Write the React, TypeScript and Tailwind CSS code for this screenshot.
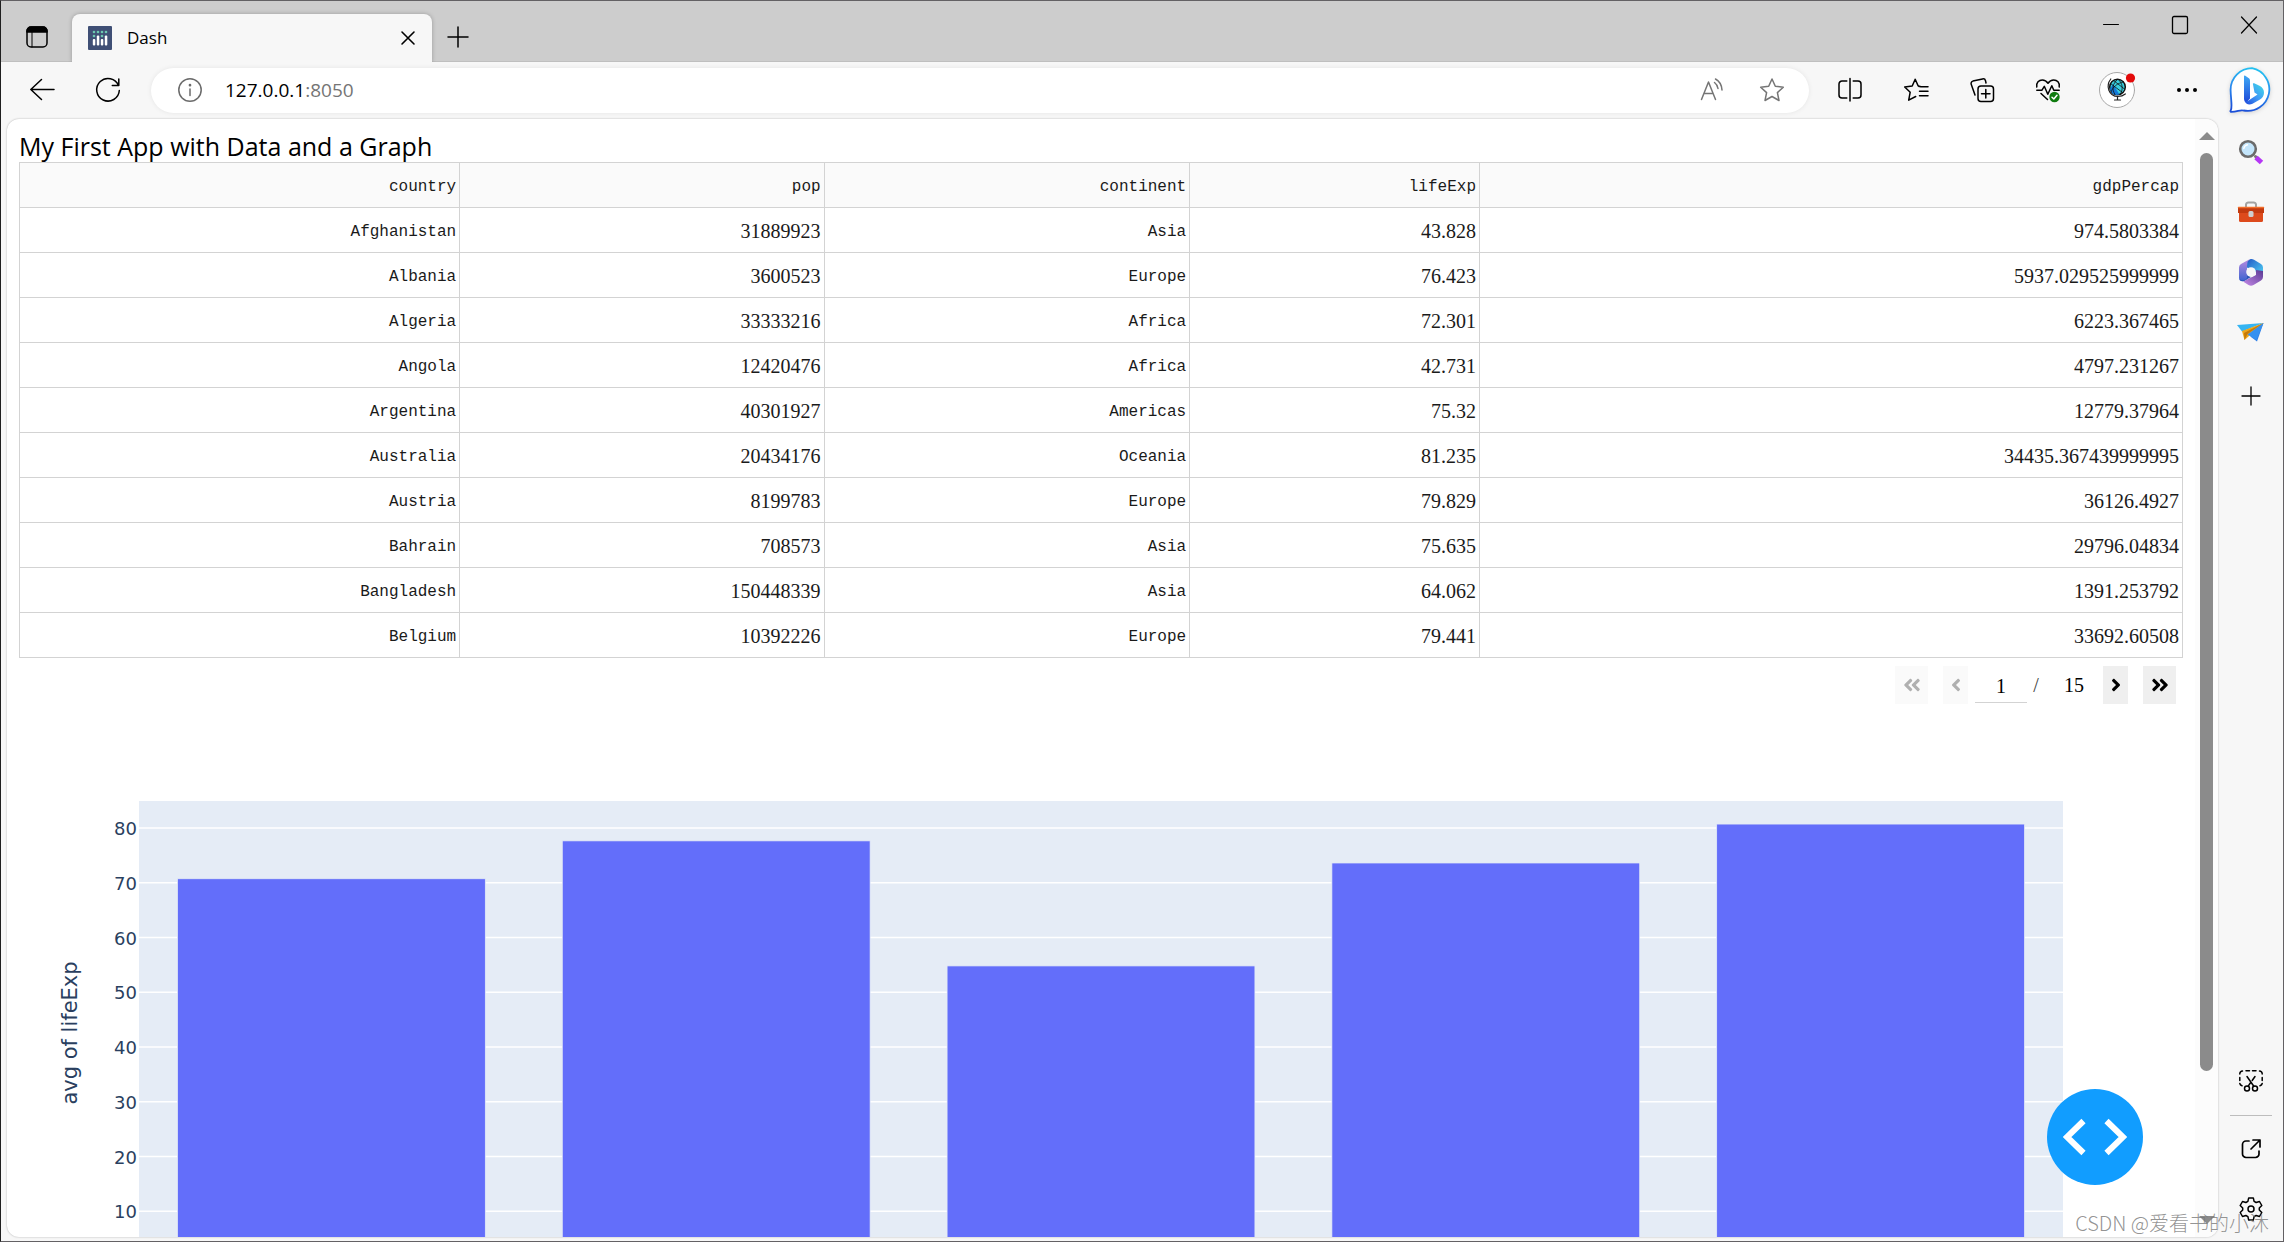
import type { ReactNode } from "react";
import { FaAngleDoubleLeft, FaAngleDoubleRight, FaAngleLeft, FaAngleRight } from "react-icons/fa";

const columns = [
  { name: "country", width: "w-[20.35%]", numeric: false },
  { name: "pop", width: "w-[16.85%]", numeric: true },
  { name: "continent", width: "w-[16.9%]", numeric: false },
  { name: "lifeExp", width: "w-[13.4%]", numeric: true },
  { name: "gdpPercap", width: "w-[32.5%]", numeric: true },
];

const rows = [
  ["Afghanistan", "31889923", "Asia", "43.828", "974.5803384"],
  ["Albania", "3600523", "Europe", "76.423", "5937.029525999999"],
  ["Algeria", "33333216", "Africa", "72.301", "6223.367465"],
  ["Angola", "12420476", "Africa", "42.731", "4797.231267"],
  ["Argentina", "40301927", "Americas", "75.32", "12779.37964"],
  ["Australia", "20434176", "Oceania", "81.235", "34435.367439999995"],
  ["Austria", "8199783", "Europe", "79.829", "36126.4927"],
  ["Bahrain", "708573", "Asia", "75.635", "29796.04834"],
  ["Bangladesh", "150448339", "Asia", "64.062", "1391.253792"],
  ["Belgium", "10392226", "Europe", "79.441", "33692.60508"],
];

const bars = [70.73, 77.65, 54.81, 73.61, 80.72];
const ticks = [10, 20, 30, 40, 50, 60, 70, 80];

const PLOT_HEIGHT = 465;
const UNIT = 5.475;

function Icon({ size = 24, width = 1.5, children }: { size?: number; width?: number; children: ReactNode }) {
  return (
    <svg
      width={size}
      height={size}
      viewBox={`0 0 ${size} ${size}`}
      fill="none"
      stroke="currentColor"
      strokeWidth={width}
      strokeLinecap="round"
      strokeLinejoin="round"
      className="shrink-0 overflow-visible"
    >
      {children}
    </svg>
  );
}

function IconButton({ label, className, children }: { label: string; className: string; children: ReactNode }) {
  return (
    <button aria-label={label} className={`flex shrink-0 items-center justify-center ${className}`}>
      {children}
    </button>
  );
}

function TabStrip() {
  return (
    <div className="flex h-[61px] shrink-0 border-b border-[#bfbfbf] bg-[#cdcdcd]">
      <IconButton label="Tab actions" className="mt-3 h-12 w-[71px]">
        <Icon size={22}>
          <rect x="1" y="1" width="20" height="20" rx="4" />
          <path d="M1 6V5a4 4 0 0 1 4-4h12a4 4 0 0 1 4 4v1z" fill="currentColor" />
          <path d="M6 6v15" strokeWidth="1" />
        </Icon>
      </IconButton>
      <div className="mt-[13px] -mb-px flex w-[360px] items-center rounded-t-lg bg-[#f7f7f7] pr-3 pl-4 shadow-[0_0_4px_rgba(0,0,0,0.25)] [clip-path:inset(-6px_-6px_0_-6px)]">
        <svg width="24" height="24" viewBox="0 0 24 24">
          <rect width="24" height="24" rx="1" fill="#3f4f75" />
          <g fill="#fff">
            <rect x="4.800" y="13" width="2.500" height="6.500" rx="1" />
            <rect x="8.800" y="9.500" width="2.500" height="10" rx="1" />
            <rect x="12.800" y="13" width="2.500" height="6.500" rx="1" />
            <rect x="16.800" y="9.500" width="2.500" height="10" rx="1" />
          </g>
          <g fill="#6cc7b0">
            <circle cx="6" cy="6" r="1.300" />
            <circle cx="10" cy="6" r="1.300" />
            <circle cx="14" cy="6" r="1.300" />
            <circle cx="18" cy="6" r="1.300" />
            <circle cx="6" cy="10" r="1.300" />
            <circle cx="14" cy="10" r="1.300" />
          </g>
        </svg>
        <span className="ml-[15px] flex-1 text-[17px]">Dash</span>
        <IconButton label="Close tab" className="h-6 w-6">
          <Icon size={12} width={1.6}>
            <path d="M0 0l12 12M12 0L0 12" />
          </Icon>
        </IconButton>
      </div>
      <IconButton label="New tab" className="mt-3 h-12 w-[52px]">
        <Icon size={20}>
          <path d="M10 0v20M0 10h20" />
        </Icon>
      </IconButton>
      <div className="flex-1" />
      <IconButton label="Minimize" className="h-12 w-[69px]">
        <Icon size={16} width={1}>
          <path d="M.5 7.500h15" />
        </Icon>
      </IconButton>
      <IconButton label="Maximize" className="h-12 w-[69px]">
        <Icon size={16} width={1.3}>
          <rect x=".5" y="-.5" width="15" height="17" rx="1.500" />
        </Icon>
      </IconButton>
      <IconButton label="Close" className="h-12 w-[69px]">
        <Icon size={16} width={1.2}>
          <path d="M.5 0l15 16M15.500 0l-15 16" />
        </Icon>
      </IconButton>
    </div>
  );
}

function BingLogo() {
  return (
    <svg width="46" height="46" viewBox="0 0 46 46" className="drop-shadow-sm">
      <defs>
        <linearGradient id="bubble" x1=".6" y1="0" x2=".4" y2="1">
          <stop offset="0" stopColor="#22c1f0" />
          <stop offset=".5" stopColor="#2a8bef" />
          <stop offset="1" stopColor="#1b4fd8" />
        </linearGradient>
        <linearGradient id="stem" x1="0" y1="0" x2="0" y2="1">
          <stop offset="0" stopColor="#3fa9f5" />
          <stop offset="1" stopColor="#1c48d8" />
        </linearGradient>
        <linearGradient id="bowl" x1="1" y1="0" x2="0" y2="1">
          <stop offset="0" stopColor="#3fe0e6" />
          <stop offset=".5" stopColor="#3f9cf5" />
          <stop offset="1" stopColor="#1f49dc" />
        </linearGradient>
      </defs>
      <path
        d="M23 1.200a21.500 21.500 0 1 1-8.500 42.300c-4-1-6 1.500-12.700 1.300c-.6-.2-.5-.8 0-1.500c1.800-3.500 0-10-.2-20.300A21.500 21.500 0 0 1 23 1.200z"
        fill="#fff"
        stroke="url(#bubble)"
        strokeWidth="1.800"
      />
      <path d="M15 9.200c0-.8.6-1 1.300-.5l3.200 2.200c1.200.8 1.500 1.500 1.500 2.800v17.800l-3.500 4c-1.700-.5-2.500-2-2.500-4z" fill="url(#stem)" />
      <path d="M24 17.500c-.4-1 .3-1.500 1.200-1.200l5.300 2.400c3 1.400 4.500 4 4.500 7c0 3-1.600 5.200-4 6.700l-7.500 4.300c-3.500 1.800-7 .2-8-3c3 1.500 4.500-.4 5.500-1.200l7.500-5l-3-2z" fill="url(#bowl)" />
    </svg>
  );
}

function Toolbar() {
  return (
    <div className="flex h-14 shrink-0 items-center bg-[#f7f7f7] pl-2">
      <IconButton label="Back" className="h-12 w-[66px]">
        <Icon>
          <path d="M24 11.500H.8M11.500 1.500L.8 11.500l10.700 10" />
        </Icon>
      </IconButton>
      <IconButton label="Refresh" className="h-12 w-[66px]">
        <Icon>
          <path d="M22.500 7.500A11.300 11.300 0 1 0 23.300 12.500M22.800 1v6.500h-6.500" />
        </Icon>
      </IconButton>
      <div className="mr-2 ml-[10px] flex h-[45px] flex-1 items-center rounded-full bg-white pr-[27px] pl-[27px] shadow-[0_0_5px_rgba(0,0,0,0.08)]">
        <span className="text-[#6b6b6b]">
          <Icon>
            <circle cx="12" cy="12" r="11.2" />
            <path d="M12 11v6.500" />
            <circle cx="12" cy="7.200" r=".6" fill="currentColor" />
          </Icon>
        </span>
        <a href="http://127.0.0.1:8050" className="ml-[23px] flex-1 text-[19px]">
          127.0.0.1<span className="text-[#757575]">:8050</span>
        </a>
        <IconButton label="Read aloud" className="h-10 w-[60px] text-[#757575]">
          <Icon>
            <path d="M1.500 21.500L8.500 4l7 17.500M4 15.500h9M14.500 4.500c2 1.500 3.200 3.500 3.500 6M15.500 1c3.700 2 6.200 6 6.500 11" />
          </Icon>
        </IconButton>
        <IconButton label="Add to favorites" className="-mr-5 h-10 w-[60px] text-[#757575]">
          <Icon>
            <path d="M12 1l3.300 7.300 8 .9-5.900 5.400 1.600 7.900-7-4-7 4 1.600-7.900L.7 9.200l8-.9z" />
          </Icon>
        </IconButton>
      </div>
      <IconButton label="Split screen" className="h-12 w-[66px]">
        <Icon>
          <path d="M8.800 3H4a3 3 0 0 0-3 3v11a3 3 0 0 0 3 3h4.800M15.200 3H20a3 3 0 0 1 3 3v11a3 3 0 0 1-3 3h-4.800M12 .5v22.500" />
        </Icon>
      </IconButton>
      <IconButton label="Favorites" className="h-12 w-[66px]">
        <Icon>
          <path d="M15 8h-.8L11.200 1.200 8.200 8l-7.500 1 5.500 5.200-1.500 8 7-3.700M16.500 8.700H24M15.500 13.200H24M15.500 17.800H24M15 8.600h1.500" />
        </Icon>
      </IconButton>
      <IconButton label="Collections" className="h-12 w-[66px]">
        <Icon>
          <rect x="8" y="8" width="15.500" height="15.500" rx="3" />
          <path d="M15.800 11.500v8.500M11.500 15.800H20M5 17L1.200 6.300a2.500 2.500 0 0 1 1.700-3.200L12.500.9a2.500 2.500 0 0 1 3 1.800l.5 2.300" />
        </Icon>
      </IconButton>
      <IconButton label="Browser essentials" className="h-12 w-[66px]">
        <Icon>
          <path d="M.8 9C0 4.500 3 2 6.300 2c2.500 0 4.500 1.500 5.700 3.300C13.200 3.500 15.200 2 17.700 2 21 2 24 4.500 23.200 9M.8 12.300h5l2.500-4 3.500 8 4-8.500 2 4.500h5.400M5 15.500l6.500 6" />
          <circle cx="18.500" cy="19" r="5.200" fill="#107c10" stroke="none" />
          <path d="M16 19.300l1.800 1.700 3.200-3.800" stroke="#fff" />
        </Icon>
      </IconButton>
      <IconButton label="Profile" className="h-12 w-[72px]">
        <Icon size={36}>
          <circle cx="18" cy="18" r="17.500" fill="#fff" stroke="#a8a8a8" strokeWidth="1" />
          <circle cx="18.500" cy="15" r="7.800" fill="#38cfe0" stroke="#111" />
          <path d="M11 17c1 5 5 7 9.500 5.500L14 12z" fill="#1379d8" stroke="none" />
          <path d="M11.500 11.500l12 9M14.500 8.500l11 8.500M18.500 7.500c-5 4-6 10-2.500 15M24.500 10c-6 1-11 5-12.500 10M19.500 7.500c4 4 5 9 2 14.500" stroke="#111" strokeWidth=".8" />
          <path d="M11.800 7c-5.500 7-2 17 7 17.500 3 0 5.500-.8 7.500-2.500M18.500 25v2.500M15.500 28h6" stroke="#222" strokeWidth="1.200" />
          <circle cx="31.500" cy="6" r="4.600" fill="#e30a0a" stroke="none" />
        </Icon>
      </IconButton>
      <IconButton label="Settings and more" className="h-12 w-[68px]">
        <Icon>
          <g fill="currentColor" stroke="none">
            <circle cx="4" cy="12" r="2" />
            <circle cx="12" cy="12" r="2" />
            <circle cx="20" cy="12" r="2" />
          </g>
        </Icon>
      </IconButton>
      <IconButton label="Bing" className="h-12 w-[62px]">
        <BingLogo />
      </IconButton>
    </div>
  );
}

function DataTable() {
  return (
    <table className="w-full table-fixed border-collapse text-right font-['Liberation_Mono',monospace] text-base text-[#1a1a1a]">
      <thead>
        <tr className="bg-[#fafafa]">
          {columns.map((column) => (
            <th key={column.name} className={`h-[45px] border border-[#d3d3d3] pt-1 pr-[3px] font-normal ${column.width}`}>
              {column.name}
            </th>
          ))}
        </tr>
      </thead>
      <tbody>
        {rows.map((row) => (
          <tr key={row[0]}>
            {row.map((cell, i) => (
              <td
                key={columns[i].name}
                className={`h-[45px] border border-[#d3d3d3] pr-[3px] ${
                  columns[i].numeric ? "pt-[2px] font-['Liberation_Serif',serif] text-xl" : "pt-1"
                }`}
              >
                {cell}
              </td>
            ))}
          </tr>
        ))}
      </tbody>
    </table>
  );
}

function Pagination() {
  return (
    <div className="mt-2 mr-[7px] flex h-[38px] items-center justify-end font-['Liberation_Serif',serif] text-xl">
      <button aria-label="First page" disabled className="flex h-full w-[33px] items-center justify-center bg-[#fafafa] text-[#b0b0b0]">
        <FaAngleDoubleLeft size={20} />
      </button>
      <button aria-label="Previous page" disabled className="ml-[15px] flex h-full w-[25px] items-center justify-center bg-[#fafafa] text-[#b0b0b0]">
        <FaAngleLeft size={20} />
      </button>
      <input
        aria-label="Current page"
        defaultValue="1"
        className="ml-[7px] h-9 w-[52px] border-b border-[#d3d3d3] pt-1 text-center outline-none"
      />
      <span className="w-[18px] text-center text-[#444]">/</span>
      <span className="w-[58px] text-center">15</span>
      <button aria-label="Next page" className="flex h-full w-[25px] items-center justify-center bg-[#efefef]">
        <FaAngleRight size={20} />
      </button>
      <button aria-label="Last page" className="ml-[15px] flex h-full w-[33px] items-center justify-center bg-[#efefef]">
        <FaAngleDoubleRight size={20} />
      </button>
    </div>
  );
}

function Histogram() {
  return (
    <svg className="mt-[7px] h-[675px] w-full font-['DejaVu_Sans',sans-serif]">
      <g fill="#2a3f5f">
        <text transform="translate(58 322) rotate(-90)" textAnchor="middle" fontSize="21">
          avg of lifeExp
        </text>
        {ticks.map((tick) => (
          <text key={tick} x="118" y={90 + PLOT_HEIGHT - tick * UNIT + 7} textAnchor="end" fontSize="18">
            {tick}
          </text>
        ))}
      </g>
      <svg x="120" y="90" className="h-[465px] w-[calc(100%-240px)]">
        <rect width="100%" height="100%" fill="#e5ecf6" />
        {ticks.map((tick) => (
          <line
            key={tick}
            x1="0"
            x2="100%"
            y1={PLOT_HEIGHT - tick * UNIT}
            y2={PLOT_HEIGHT - tick * UNIT}
            stroke="#fff"
            strokeWidth="1.5"
          />
        ))}
        {bars.map((value, i) => (
          <rect
            key={i}
            x={`${i * 20 + 2}%`}
            y={PLOT_HEIGHT - value * UNIT}
            width="16%"
            height={value * UNIT}
            fill="#636efa"
            stroke="#e5ecf6"
            strokeWidth=".75"
          />
        ))}
      </svg>
    </svg>
  );
}

function Scrollbar() {
  return (
    <div className="flex w-[23px] shrink-0 flex-col items-center bg-[#fcfcfc] pt-[13px] pb-[13px] text-[#8b8b8b]">
      <svg width="16" height="8" viewBox="0 0 16 8" fill="currentColor">
        <path d="M8 0l8 8H0z" />
      </svg>
      <div className="mt-[13px] flex w-[13px] flex-1 flex-col">
        <div className="h-[86.4%] rounded-full bg-[#8b8b8b]" />
      </div>
      <svg width="16" height="8" viewBox="0 0 16 8" fill="currentColor">
        <path d="M0 0h16L8 8z" />
      </svg>
    </div>
  );
}

function Sidebar() {
  return (
    <aside className="flex w-[65px] shrink-0 flex-col pt-1 pb-[2px]">
      <IconButton label="Search" className="h-[60px] w-full">
        <Icon>
          <path d="M16.500 16.500l2 2" stroke="#777" strokeWidth="3" />
          <path d="M17 17.500l5.500 5" stroke="#b536f5" strokeWidth="5" strokeLinecap="butt" />
          <circle cx="9" cy="9" r="7.800" fill="#c3e5fb" stroke="#6b6b6b" strokeWidth="2.600" />
          <path d="M4.800 8.500a4.500 4.500 0 0 1 3.700-3.700" stroke="#fff" />
        </Icon>
      </IconButton>
      <IconButton label="Shopping" className="h-[60px] w-full">
        <Icon size={28}>
          <path d="M9 9V6.500A2.500 2.500 0 0 1 11.500 4.500h5A2.500 2.500 0 0 1 19 6.500V9" stroke="#a3a3a3" strokeWidth="2" />
          <path d="M2 13h24v9.500a1.500 1.500 0 0 1-1.500 1.500h-21A1.500 1.500 0 0 1 2 22.500z" fill="#dd4a1c" stroke="none" />
          <path d="M2 9h24a1 1 0 0 1 1 1v5H1v-5a1 1 0 0 1 1-1z" fill="#c23a10" stroke="none" />
          <path d="M1.500 9.500h25" stroke="#f2702c" strokeWidth="1.500" />
          <rect x="11.500" y="13" width="5" height="6" rx="1.500" fill="#cfcfcf" stroke="none" />
        </Icon>
      </IconButton>
      <IconButton label="Microsoft 365" className="h-[60px] w-full">
        <svg width="26" height="28" viewBox="0 0 26 28">
          <defs>
            <linearGradient id="m365a" x1="0" y1="0" x2="0" y2="1">
              <stop offset="0" stopColor="#b98be0" />
              <stop offset="1" stopColor="#3b63d0" />
            </linearGradient>
            <linearGradient id="m365b" x1="0" y1="0" x2="1" y2="1">
              <stop offset="0" stopColor="#2458c5" />
              <stop offset="1" stopColor="#4fd4f6" />
            </linearGradient>
            <linearGradient id="m365c" x1="1" y1="0" x2="0" y2="1">
              <stop offset="0" stopColor="#5a3a93" />
              <stop offset="1" stopColor="#c58ae8" />
            </linearGradient>
          </defs>
          <path d="M12 1L3 6a4 4 0 0 0-2 3.500V20c0 3 3 4 5 2.800L9 21V9c0-3 1-6 3-8z" fill="url(#m365a)" />
          <path d="M10 3c2-2.500 4-2.500 6-1.300L23 6a4 4 0 0 1 2 3.500V16c0 1-1 1.500-2 1L9 9.500c0-2.500 0-5 1-6.500z" fill="url(#m365b)" />
          <path d="M25 13v6a4 4 0 0 1-2 3.400L15.500 27a5 5 0 0 1-5 0L5 23.500 18 17v-5z" fill="url(#m365c)" />
          <path d="M1.500 21c1.500 3 4 2.500 6 1.300L13 19l-4-3v4c-2 2.500-5 3-7.500 1z" fill="#2c53b8" />
          <circle cx="13" cy="14" r="4.800" fill="#f7f7f7" />
        </svg>
      </IconButton>
      <IconButton label="Drop" className="h-[60px] w-full">
        <svg width="27" height="20" viewBox="0 0 27 20">
          <path d="M0 3L26.500 1 5 9.500z" fill="#35b5f2" />
          <path d="M26.500 1L20 19.500l-6-4.500-3-5.500z" fill="#2f7fe8" />
          <path d="M26.500 1L5 9l2.500 9z" fill="#eda51b" />
          <path d="M26.500 1L10.500 12l-3 6L7 11z" fill="#c67a08" />
          <path d="M26.500 1L10.500 12.500 19.500 18z" fill="#3490f0" />
        </svg>
      </IconButton>
      <IconButton label="Customize" className="mt-1 h-[60px] w-full">
        <Icon size={18} width={1.3}>
          <path d="M9 0v18M0 9h18" />
        </Icon>
      </IconButton>
      <div className="flex-1" />
      <IconButton label="Screenshot" className="h-[60px] w-full">
        <Icon>
          <path d="M.8 5V4.500A3 3 0 0 1 3.500 2M7 1.800h3.500M13.500 1.800H17M20.500 2a3 3 0 0 1 2.700 2.500V5M.8 8.500v3M23.200 8.500v3M.8 14.500a3 3 0 0 0 2.200 2.300M23.200 14.500a3 3 0 0 1-2.200 2.300M8 7.500l6.800 9.700M16 7.500l-2.800 4M11.300 14l-2.100 3.200" />
          <circle cx="8" cy="19.500" r="2.500" />
          <circle cx="16" cy="19.500" r="2.500" />
        </Icon>
      </IconButton>
      <hr className="mx-auto mt-1 mb-[3px] w-[42px] border-[#bdbdbd]" />
      <IconButton label="Open link" className="h-[60px] w-full">
        <Icon size={20} width={1.7}>
          <path d="M8 2H5a3.500 3.500 0 0 0-3.500 3.500v9.500A3.500 3.500 0 0 0 5 18.500h9.500A3.500 3.500 0 0 0 18 15v-3M12 1h7v7M19 1l-9 9" />
        </Icon>
      </IconButton>
      <IconButton label="Settings" className="h-[60px] w-full">
        <Icon>
          <path d="M9.700.9h4.600l.8 3.400 2 1.200 3.400-1 2.300 4-2.500 2.500v2l2.500 2.500-2.300 4-3.400-1-2 1.200-.8 3.400H9.700l-.8-3.400-2-1.200-3.400 1-2.300-4L3.700 13v-2L1.200 8.500l2.300-4 3.400 1 2-1.200z" />
          <circle cx="12" cy="12" r="3" />
        </Icon>
      </IconButton>
    </aside>
  );
}

export default function App() {
  return (
    <div className="relative flex h-screen flex-col overflow-hidden border border-[#636164] border-l-[#1f1f1f] bg-[#f7f7f7] font-['Open_Sans',sans-serif] text-black">
      <TabStrip />
      <Toolbar />
      <div className="flex min-h-0 flex-1">
        <main className="relative mt-px mb-1 ml-[6px] flex min-w-0 flex-1 overflow-hidden rounded-xl bg-white shadow-[0_0_2px_rgba(0,0,0,0.3)]">
          <div className="min-w-0 flex-1 overflow-hidden px-3 pt-[11px]">
            <h1 className="text-[25px] leading-8">My First App with Data and a Graph</h1>
            <DataTable />
            <Pagination />
            <Histogram />
          </div>
          <Scrollbar />
          <button
            aria-label="Dev tools"
            className="absolute right-[75px] bottom-[52px] flex h-24 w-24 items-center justify-center rounded-full bg-[#119dff]"
          >
            <svg width="64" height="38" viewBox="0 0 64 38" fill="none" stroke="#fff" strokeWidth="6">
              <path d="M20.500 3L4 19l16.500 16M43.500 3L60 19 43.500 35" />
            </svg>
          </button>
        </main>
        <Sidebar />
      </div>
      <p className="absolute right-[14px] bottom-1 font-['Noto_Sans_CJK_SC',sans-serif] text-[20px] leading-[28px] font-light text-[#777]/80">
        CSDN @爱看书的小沐
      </p>
    </div>
  );
}
